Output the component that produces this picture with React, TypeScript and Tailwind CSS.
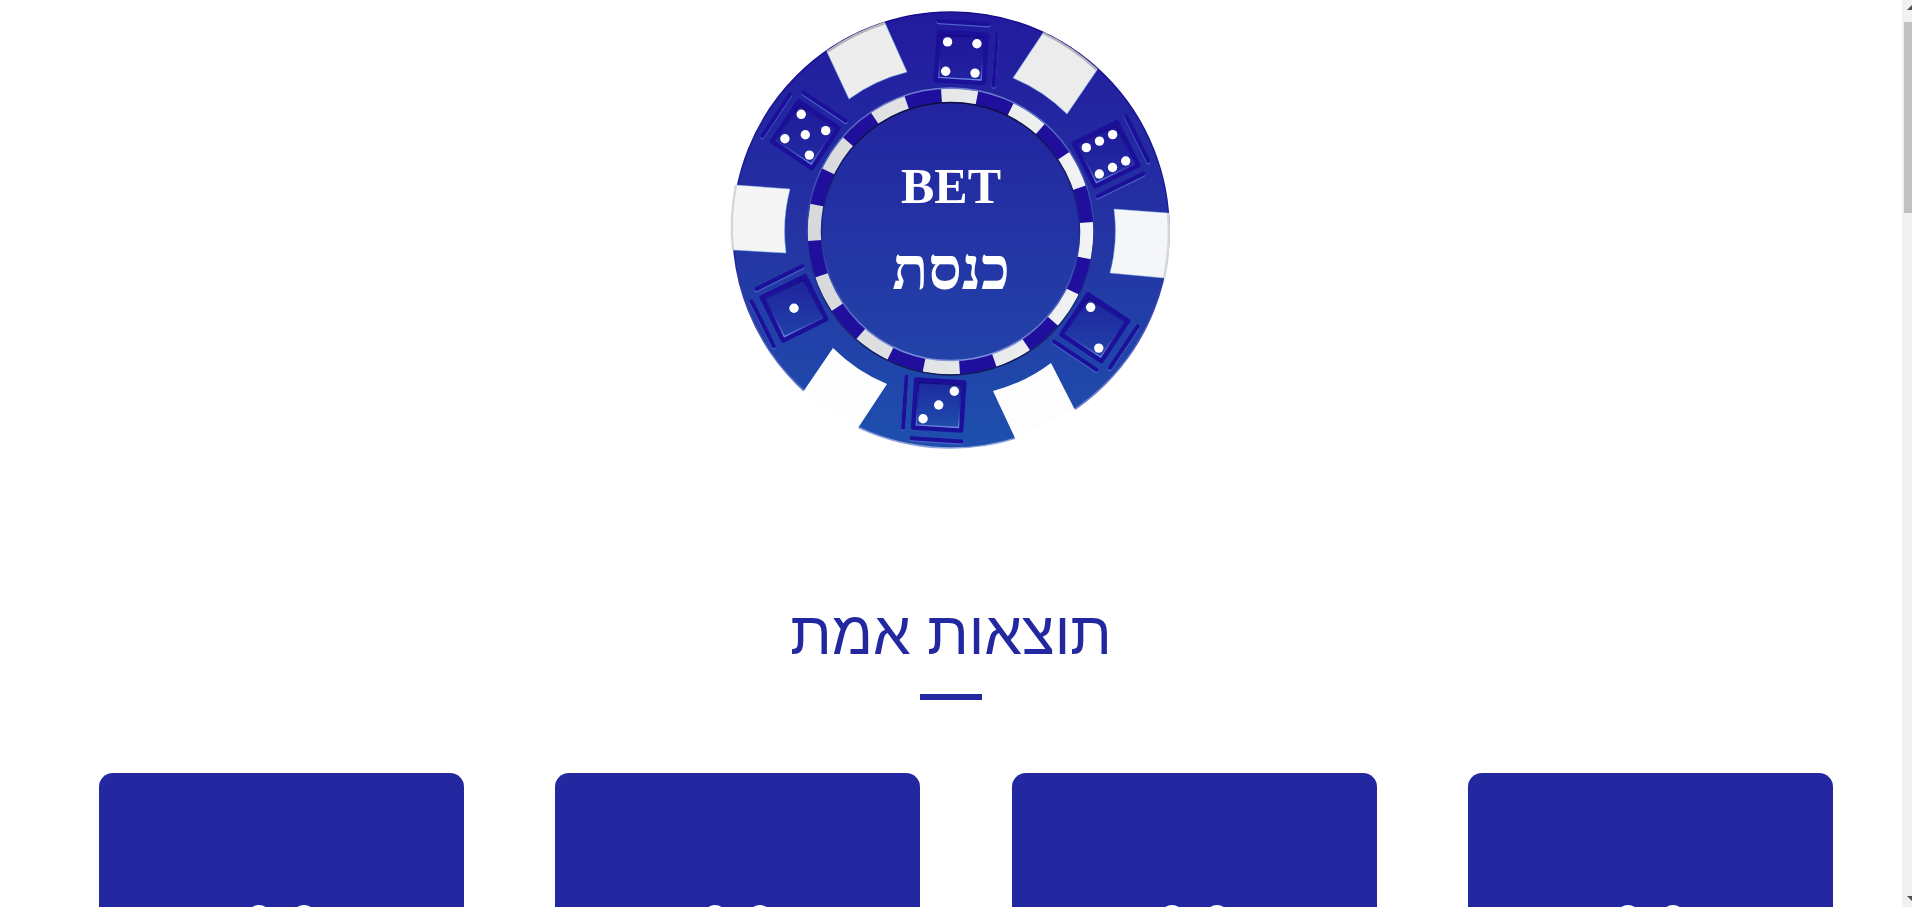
const CX = 950.5;
const CY = 231.5;

type P = [number, number];

const rot = (c: P, deg: number, x: number, y: number): P => {
  const a = (deg * Math.PI) / 180;
  return [c[0] + x * Math.cos(a) - y * Math.sin(a), c[1] + x * Math.sin(a) + y * Math.cos(a)];
};

const wedges: { p: P[]; fill: string; rim: string; rw: number; edge: number }[] = [
  { p: [[827, 52], [885, 23], [907, 72], [849, 99]], fill: "#ededee", rim: "#b4b4bc", rw: 2.4, edge: 0.7 },
  { p: [[1043, 33], [1097, 70], [1067, 114], [1013, 78]], fill: "#ececec", rim: "#b4b4bc", rw: 2.4, edge: 0.7 },
  { p: [[1168, 213], [1164, 278], [1110, 273], [1114, 209]], fill: "#f5f6f7", rim: "#d4d6dc", rw: 2.4, edge: 0.6 },
  { p: [[1075, 410], [1015, 438], [993, 391], [1051, 363]], fill: "#fdfdfe", rim: "#ffffff", rw: 4, edge: 0 },
  { p: [[858, 428], [803, 392], [833, 348], [887, 384]], fill: "#fefefe", rim: "#ffffff", rw: 4, edge: 0 },
  { p: [[733, 250], [736, 185], [790, 189], [786, 253]], fill: "#f5f5f5", rim: "#d4d6dc", rw: 2.4, edge: 0.6 },
];

const d = 14.7;
const dice: { c: P; a: number; pips: P[] }[] = [
  { c: [961.3, 57.5], a: 3.7, pips: [[-d, -d], [d, -d], [-d, d], [d, d]] },
  { c: [805.3, 134.7], a: -56.3, pips: [[0, 0], [-d, -d], [d, -d], [-d, d], [d, d]] },
  { c: [1106, 154.3], a: 63.7, pips: [[-d, -d], [-d, 0], [-d, d], [d, -d], [d, 0], [d, d]] },
  { c: [1094.7, 327.7], a: 123.7, pips: [[d, -d], [-d, d]] },
  { c: [938.7, 405], a: 183.7, pips: [[-d, d], [0, 0], [d, -d]] },
  { c: [794, 308.3], a: 243.7, pips: [[0, 0]] },
];

const line = (pts: P[]) => pts.map((p) => `${p[0].toFixed(1)},${p[1].toFixed(1)}`).join(" ");

function Die({ c, a, pips }: { c: P; a: number; pips: P[] }) {
  const square = (h: number): P[] => [rot(c, a, -h, -h), rot(c, a, h, -h), rot(c, a, h, h), rot(c, a, -h, h)];
  const topBar: P[] = [rot(c, a, -25, -35), rot(c, a, 25, -35)];
  const rightBar: P[] = [rot(c, a, 34, -25), rot(c, a, 34, 26)];
  return (
    <g>
      {[topBar, rightBar].map((b, i) => (
        <g key={i}>
          <line x1={b[0][0]} y1={b[0][1] + 1.1} x2={b[1][0]} y2={b[1][1] + 1.1} stroke="#4a63c8" strokeWidth="4.2" strokeLinecap="round" />
          <line x1={b[0][0]} y1={b[0][1]} x2={b[1][0]} y2={b[1][1]} stroke="#1c0f9a" strokeWidth="4" strokeLinecap="round" />
        </g>
      ))}
      <polygon points={line(square(24))} fill="none" stroke="#1c0f9a" strokeWidth="4.6" strokeLinejoin="round" />
      <polygon points={line(square(21.2))} fill="url(#dieInner)" stroke="url(#dieEdge)" strokeWidth="1.3" />
      {pips.map((p, i) => {
        const q = rot(c, a, p[0], p[1]);
        return <circle key={i} cx={q[0]} cy={q[1]} r="4.7" fill="#ffffff" />;
      })}
    </g>
  );
}

function Chip() {
  return (
    <svg viewBox="721 0 460 460" className="block w-[460px] h-[460px]">
      <defs>
        <linearGradient id="disc" x1="0" y1="0" x2="0" y2="1">
          <stop offset="0" stopColor="#221a9e" />
          <stop offset="0.5" stopColor="#2433a3" />
          <stop offset="1" stopColor="#1e50ae" />
        </linearGradient>
        <linearGradient id="rim" x1="0" y1="0" x2="0" y2="1">
          <stop offset="0" stopColor="#190b8e" />
          <stop offset="0.55" stopColor="#1e1f9c" />
          <stop offset="1" stopColor="#8fa3dc" />
        </linearGradient>
        <linearGradient id="center" x1="0" y1="0" x2="0" y2="1">
          <stop offset="0" stopColor="#23249f" />
          <stop offset="1" stopColor="#2343a9" />
        </linearGradient>
        <linearGradient id="ringWhite" x1="0" y1="0" x2="0" y2="1">
          <stop offset="0" stopColor="#d7d9db" />
          <stop offset="1" stopColor="#f2f4f4" />
        </linearGradient>
        <linearGradient id="ringOut" x1="0" y1="0" x2="0" y2="1">
          <stop offset="0" stopColor="#6f7fd0" />
          <stop offset="0.5" stopColor="#2a3aa8" />
          <stop offset="1" stopColor="#0e1a4e" />
        </linearGradient>
        <linearGradient id="ringIn" x1="0" y1="0" x2="0" y2="1">
          <stop offset="0" stopColor="#0c0c40" />
          <stop offset="0.5" stopColor="#1c2a90" />
          <stop offset="1" stopColor="#7f93dc" />
        </linearGradient>
        <linearGradient id="dieEdge" x1="0" y1="0" x2="0" y2="1">
          <stop offset="0" stopColor="#15097a" />
          <stop offset="0.5" stopColor="#1c1a96" stopOpacity="0.4" />
          <stop offset="1" stopColor="#6b88e0" />
        </linearGradient>
        <linearGradient id="dieInner" x1="0" y1="0" x2="0" y2="1">
          <stop offset="0" stopColor="#1a1296" stopOpacity="0.55" />
          <stop offset="1" stopColor="#1a1296" stopOpacity="0" />
        </linearGradient>
      </defs>
      <circle cx="951" cy="230" r="218" fill="url(#disc)" stroke="url(#rim)" strokeWidth="1.5" />
      {wedges.map((w, i) => {
        const [A, B, C, D] = w.p;
        return (
          <g key={i}>
            <path
              d={`M${A[0]} ${A[1]}A218 218 0 0 1 ${B[0]} ${B[1]}L${C[0]} ${C[1]}A165 165 0 0 0 ${D[0]} ${D[1]}Z`}
              fill={w.fill}
              stroke="#7db7ea"
              strokeWidth="0.8"
              strokeOpacity={w.edge}
            />
            <path d={`M${A[0]} ${A[1]}A218 218 0 0 1 ${B[0]} ${B[1]}`} fill="none" stroke={w.rim} strokeWidth={w.rw} />
          </g>
        );
      })}
      {dice.map((die, i) => (
        <Die key={i} {...die} />
      ))}
      <circle cx={CX} cy={CY} r="136" fill="none" stroke="#1f0f9c" strokeWidth="14" />
      <circle
        cx={CX}
        cy={CY}
        r="136"
        fill="none"
        stroke="url(#ringWhite)"
        strokeWidth="14"
        pathLength={24}
        strokeDasharray="1 1"
        transform={`rotate(-93.8 ${CX} ${CY})`}
      />
      <circle cx={CX} cy={CY} r="143.5" fill="none" stroke="url(#ringOut)" strokeWidth="1.4" />
      <circle cx={CX} cy={CY} r="129" fill="url(#center)" stroke="url(#ringIn)" strokeWidth="1.6" />
    </svg>
  );
}

function ScrollBar() {
  return (
    <div className="flex w-[10px] h-[907px] shrink-0 flex-col bg-[#f1f1f1]">
      <div className="flex h-[22px] items-start justify-end pt-[5px]">
        <svg width="5" height="5" viewBox="0 0 5 5" className="block">
          <path d="M0 5 L5 0 L5 5 Z" fill="#505050" />
        </svg>
      </div>
      <div className="ml-[2px] h-[191px] w-[8px] bg-[#c1c1c1]" />
      <div className="flex-1" />
      <div className="flex h-[12px] items-start justify-end pt-[1px]">
        <svg width="5" height="5" viewBox="0 0 5 5" className="block">
          <path d="M0 0 L5 0 L5 5 Z" fill="#505050" />
        </svg>
      </div>
    </div>
  );
}

function Card() {
  return (
    <div className="flex h-[420px] w-[365px] shrink-0 justify-center gap-[21px] rounded-[14px] bg-[#2328a0] pt-[132px]">
      <div className="h-6 w-6 rounded-full bg-white" />
      <div className="h-6 w-6 rounded-full bg-white" />
    </div>
  );
}

export default function App() {
  return (
    <div className="flex h-[907px] w-full overflow-hidden bg-white">
      <main className="flex min-w-0 flex-1 flex-col items-center">
        <div className="relative h-[460px] w-[460px] shrink-0">
          <Chip />
          <div className="absolute left-0 top-[157px] flex w-full flex-col items-center text-white [font-family:'Liberation_Serif',serif]">
            <div className="text-[50px] font-bold leading-[58px]">BET</div>
            <div dir="rtl" className="mt-[25px] text-[59px] font-bold leading-[58px]">
              כנסת
            </div>
          </div>
        </div>
        <h1
          dir="rtl"
          className="mt-[143px] text-[60px] font-normal leading-[62px] text-[#2328a0] [font-family:'Liberation_Sans',sans-serif]"
        >
          תוצאות אמת
        </h1>
        <div className="mt-[29px] h-[6px] w-[62px] shrink-0 bg-[#2328a0]" />
        <div className="mt-[73px] flex w-full gap-[91.3px] pl-[99px]">
          <Card />
          <Card />
          <Card />
          <Card />
        </div>
      </main>
      <ScrollBar />
    </div>
  );
}
